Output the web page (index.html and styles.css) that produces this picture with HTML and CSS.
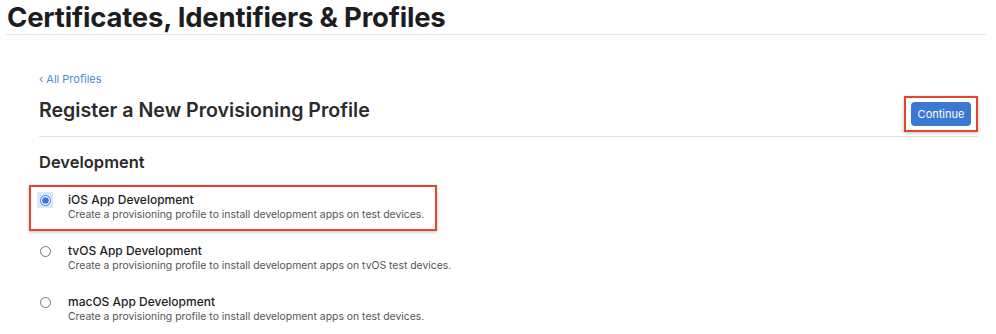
FILE: index.html
```html
<!DOCTYPE html>
<html lang="en">
<head>
    <meta charset="UTF-8">
    <title>Certificates, Identifiers &amp; Profiles</title>
    <link rel="stylesheet" href="styles.css">
</head>
<body>
    <header class="page-header">
        <h1>Certificates, Identifiers &amp; Profiles</h1>
    </header>

    <main class="content">
        <a class="back-link" href="#">&lsaquo; All Profiles</a>

        <div class="title-row">
            <h2>Register a New Provisioning Profile</h2>
            <div class="highlight highlight-button">
                <button type="button" class="btn-primary">Continue</button>
            </div>
        </div>

        <h3>Development</h3>

        <!-- Profile types -->
        <div class="options">
            <label class="option highlight">
                <span class="radio-wrap"><input type="radio" name="type" checked></span>
                <span class="option-text">
                    <span class="option-title">iOS App Development</span>
                    <span class="option-desc">Create a provisioning profile to install development apps on test devices.</span>
                </span>
            </label>

            <label class="option">
                <span class="radio-wrap"><input type="radio" name="type"></span>
                <span class="option-text">
                    <span class="option-title">tvOS App Development</span>
                    <span class="option-desc">Create a provisioning profile to install development apps on tvOS test devices.</span>
                </span>
            </label>

            <label class="option">
                <span class="radio-wrap"><input type="radio" name="type"></span>
                <span class="option-text">
                    <span class="option-title">macOS App Development</span>
                    <span class="option-desc">Create a provisioning profile to install development apps on test devices.</span>
                </span>
            </label>
        </div>
    </main>
</body>
</html>
```

FILE: styles.css
```css
/* General */
body {
    margin: 0;
    background: #fff;
    color: #222;
    font-family: Inter, "Liberation Sans", Arial, sans-serif;
    overflow: hidden;
}

/* Header */
.page-header {
    margin: 0 10px 0 6px;
    border-bottom: 1px solid #e6e6e6;
    height: 34px;
}

.page-header h1 {
    margin: 0;
    padding: 1px 0 0 1px;
    font-size: 27.5px;
    line-height: 32px;
    font-weight: 700;
    color: #1d1d1f;
    letter-spacing: -0.2px;
}

/* Content */
.content {
    padding: 37px 18px 0 39px;
}

.back-link {
    display: block;
    font-size: 11px;
    line-height: 14px;
    color: #4a8ad6;
    text-decoration: none;
}

.title-row {
    display: flex;
    justify-content: space-between;
    align-items: center;
    margin-top: 2px;
    height: 48px;
    border-bottom: 1px solid #e3e3e3;
}

.title-row h2 {
    margin: 0 0 4px;
    font-size: 19.6px;
    font-weight: 600;
    color: #2b2b2b;
}

.highlight {
    border: 2px solid #e2472d;
    box-shadow: 0 1px 3px rgba(0, 0, 0, 0.25);
}

.highlight-button {
    padding: 4px 5px;
    margin-top: 3px;
}

.btn-primary {
    display: block;
    width: 60px;
    height: 24px;
    border: none;
    border-radius: 4px;
    background: #3b78d0;
    color: #fff;
    font-family: inherit;
    font-size: 11px;
    padding: 0;
}

h3 {
    margin: 15px 0 0;
    font-size: 16.5px;
    line-height: 20px;
    font-weight: 600;
    color: #2b2b2b;
}

/* Options */
.options {
    display: flex;
    flex-direction: column;
    gap: 5px;
    margin-top: 13px;
    margin-left: -10px;
}

.option {
    display: flex;
    align-items: flex-start;
    width: 398px;
    padding: 5px 0 7px 6px;
    border: 2px solid transparent;
}

.option.highlight {
    border-color: #e2472d;
}

.radio-wrap {
    width: 16px;
    height: 16px;
    display: flex;
    align-items: center;
    justify-content: center;
    flex-shrink: 0;
}

.highlight .radio-wrap {
    background: #dbe8fb;
}

.radio-wrap input {
    margin: 0;
    width: 11px;
    height: 11px;
    accent-color: #3a74e0;
}

.option-text {
    display: flex;
    flex-direction: column;
    margin-left: 15px;
    white-space: nowrap;
}

.option-title {
    font-size: 12px;
    line-height: 16px;
    font-weight: 500;
    color: #1d1d1f;
}

.option-desc {
    font-size: 10.4px;
    line-height: 14px;
    color: #555;
}
```
